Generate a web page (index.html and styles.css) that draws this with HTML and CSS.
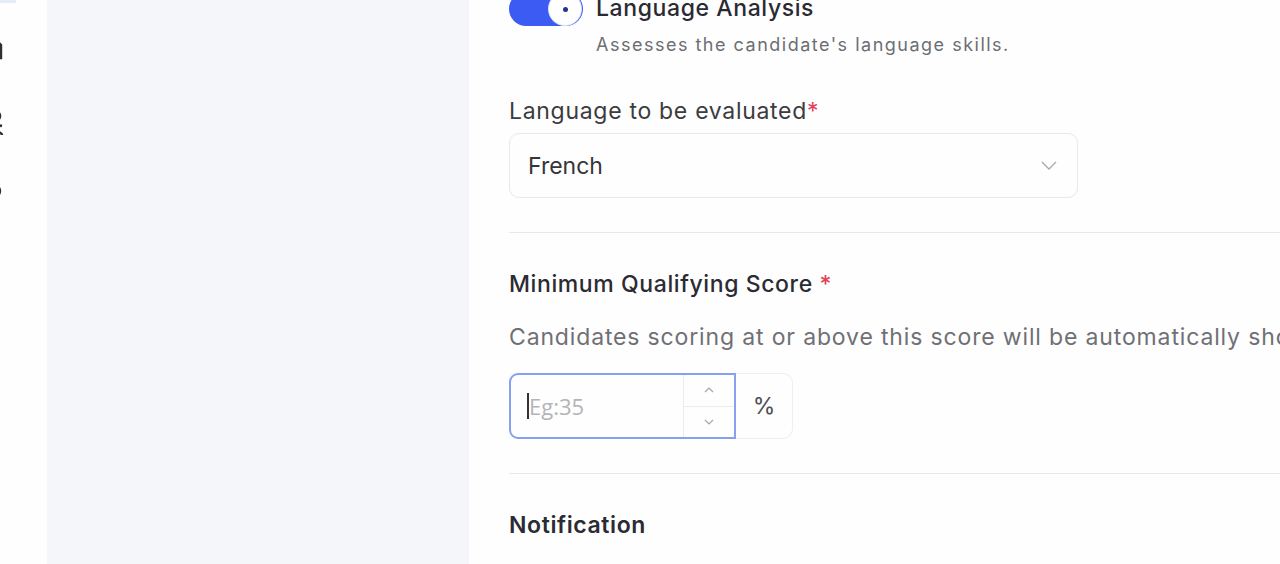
FILE: index.html
```html
<!DOCTYPE html>
<html lang="en">
<head>
    <meta charset="UTF-8">
    <meta name="viewport" content="width=device-width, initial-scale=1.0">
    <title>Assessment Settings</title>
    <link rel="stylesheet" href="styles.css">
</head>
<body>
    <div class="app">
        <nav class="sidebar">
            <div class="nav-active"></div>
            <svg class="nav-icon icon-a" width="24" height="20" viewBox="0 0 24 20"><path d="M4 2h14l3 3v13H4z" fill="none" stroke="#2d2d33" stroke-width="2.4"/></svg>
            <svg class="nav-icon icon-b" width="24" height="30" viewBox="0 0 24 30"><circle cx="15" cy="8" r="5" fill="none" stroke="#2d2d33" stroke-width="2.6"/><path d="M22 18c-4-1-9 0-9 3s9 2 9 6" fill="none" stroke="#2d2d33" stroke-width="2.6"/></svg>
            <svg class="nav-icon icon-c" width="24" height="16" viewBox="0 0 24 16"><circle cx="14" cy="8" r="6" fill="none" stroke="#2d2d33" stroke-width="2.4"/></svg>
        </nav>

        <aside class="steps"></aside>

        <main class="panel">
            <section class="toggle-row">
                <div class="switch"><span class="knob"><span class="dot"></span></span></div>
                <div>
                    <div class="toggle-title">Language Analysis</div>
                    <div class="toggle-desc">Assesses the candidate's language skills.</div>
                </div>
            </section>

            <label class="field-label">Language to be evaluated<span class="req">*</span></label>
            <div class="select">
                <span>French</span>
                <svg width="16" height="10" viewBox="0 0 16 10"><path d="M1 1l7 7 7-7" fill="none" stroke="#a9abb0" stroke-width="1.4"/></svg>
            </div>

            <hr class="divider">

            <h3 class="section-title">Minimum Qualifying Score <span class="req">*</span></h3>
            <p class="section-desc">Candidates scoring at or above this score will be automatically shortlisted.</p>
            <div class="score-group">
                <div class="score-input">
                    <span class="caret"></span><span class="placeholder">Eg:35</span>
                    <div class="spinner">
                        <div class="spin"><svg width="10" height="6" viewBox="0 0 10 6"><path d="M1 5l4-4 4 4" fill="none" stroke="#a6a6a6" stroke-width="1.2"/></svg></div>
                        <div class="spin"><svg width="10" height="6" viewBox="0 0 10 6"><path d="M1 1l4 4 4-4" fill="none" stroke="#a6a6a6" stroke-width="1.2"/></svg></div>
                    </div>
                </div>
                <div class="addon">%</div>
            </div>

            <hr class="divider">

            <h3 class="section-title bold">Notification</h3>
        </main>
    </div>
</body>
</html>
```

FILE: styles.css
```css
body { margin: 0; font-family: Inter, "Noto Sans", sans-serif; color: #2b2b33; }
.app { display: flex; height: 564px; overflow: hidden; }

.sidebar { width: 47px; flex: none; background: #fefefe; display: flex; flex-direction: column; overflow: hidden; }
.nav-active { width: 16px; height: 3px; background: #e6ebfb; }
.nav-icon { margin-left: -20px; flex: none; }
.icon-a { margin-top: 37px; }
.icon-b { margin-top: 48px; }
.icon-c { margin-top: 45px; }

.steps { width: 422px; flex: none; background: #f5f6fa; }

.panel { flex: 1; min-width: 0; background: #fefefe; padding-left: 40px; overflow: hidden; }

.toggle-row { display: flex; gap: 13px; margin-top: -8px; align-items: flex-start; }
.switch { width: 74px; height: 34px; flex: none; border-radius: 17px; background: #3b5bf3; display: flex; justify-content: flex-end; align-items: center; padding-right: 2px; box-sizing: border-box; }
.knob { width: 32px; height: 32px; border-radius: 50%; background: #fff; display: flex; align-items: center; justify-content: center; box-shadow: 0 0 0 1px #dfe4f7; }
.dot { width: 5px; height: 5px; border-radius: 50%; background: #23358f; }
.toggle-title { margin-top: 2px; font-size: 23px; line-height: 28px; letter-spacing: 0.6px; font-weight: 500; color: #2a2a32; white-space: nowrap; }
.toggle-desc { margin-top: 12px; font-size: 18px; line-height: 22px; letter-spacing: 1.5px; color: #6c6e73; white-space: nowrap; }

.field-label { display: block; margin-top: 41px; font-size: 23px; line-height: 28px; letter-spacing: 0.7px; color: #3b3b40; }
.req { color: #e0405a; }

.select { margin-top: 8px; width: 569px; height: 65px; box-sizing: border-box; border: 1px solid #e6e8ec; border-radius: 10px; display: flex; align-items: center; justify-content: space-between; padding: 0 20px 0 18px; font-size: 23px; color: #35353a; }

.divider { margin: 34px 0 0; border: none; border-top: 1px solid #e8e9ec; }

.section-title { margin: 37px 0 0; font-size: 23px; line-height: 28px; letter-spacing: 0.6px; font-weight: 500; color: #2b2b33; }
.section-title.bold { font-weight: 600; }
.section-desc { margin: 25px 0 0; font-size: 23px; line-height: 28px; letter-spacing: 0.85px; color: #6f7075; white-space: nowrap; }

.score-group { margin-top: 22px; display: flex; height: 66px; }
.score-input { width: 227px; box-sizing: border-box; border: 2px solid #86a0f2; border-radius: 9px 0 0 9px; display: flex; align-items: center; padding-left: 16px; font-family: "Open Sans", "Noto Sans", sans-serif; font-size: 22px; }
.caret { width: 2px; height: 26px; background: #333; }
.placeholder { flex: 1; color: #b4b4b8; }
.spinner { width: 50px; height: 100%; border-left: 1px solid #ececee; display: flex; flex-direction: column; }
.spin { flex: 1; display: flex; align-items: center; justify-content: center; }
.spin + .spin { border-top: 1px solid #ececee; }
.addon { width: 57px; box-sizing: border-box; border: 1px solid #eeeff1; border-left: none; border-radius: 0 10px 10px 0; display: flex; align-items: center; justify-content: center; font-size: 23px; color: #4d4d52; }
```
